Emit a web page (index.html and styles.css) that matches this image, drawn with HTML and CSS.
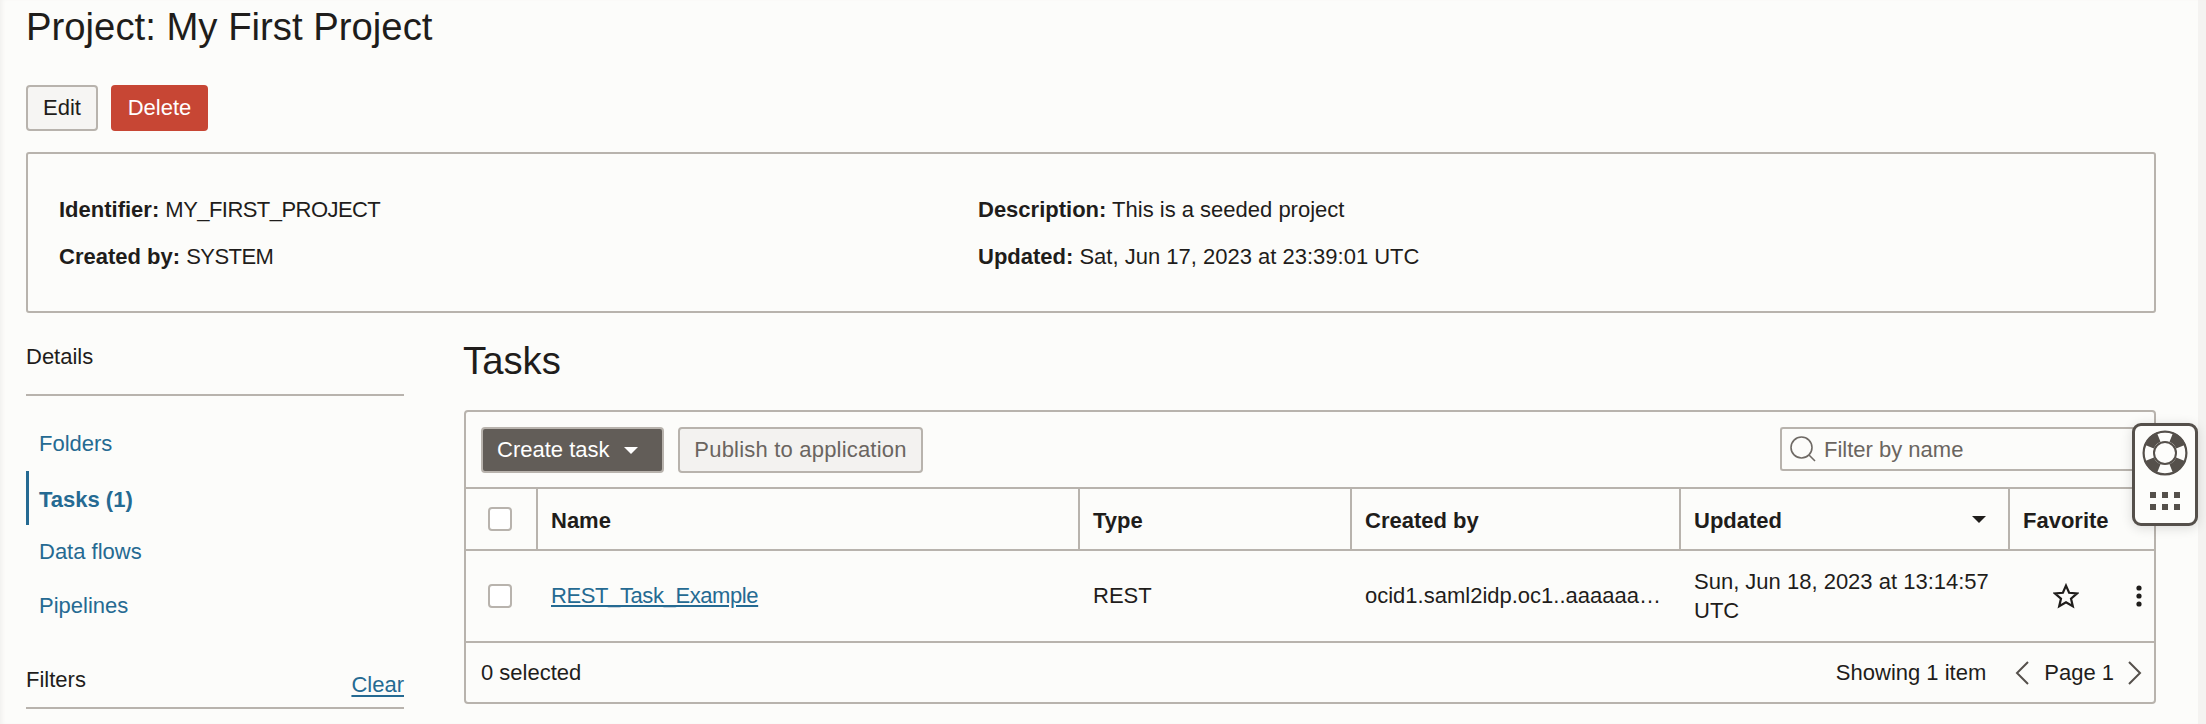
FILE: index.html
```html
<!DOCTYPE html>
<html lang="en">
<head>
<meta charset="utf-8">
<title>Project: My First Project</title>
<link rel="stylesheet" href="styles.css">
</head>
<body>
<div class="page">
  <h1 class="title">Project: My First Project</h1>
  <div class="actions">
    <button class="btn btn-edit">Edit</button>
    <button class="btn btn-delete">Delete</button>
  </div>
  <section class="info">
    <div class="info-col">
      <p class="info-line"><b>Identifier:</b> <span class="tight">MY_FIRST_PROJECT</span></p>
      <p class="info-line"><b>Created by:</b> <span class="tight">SYSTEM</span></p>
    </div>
    <div class="info-col">
      <p class="info-line"><b>Description:</b> This is a seeded project</p>
      <p class="info-line"><b>Updated:</b> Sat, Jun 17, 2023 at 23:39:01 UTC</p>
    </div>
  </section>
  <div class="layout">
    <aside class="side">
      <div class="side-head">Details</div>
      <nav class="side-nav">
        <a class="nav-item">Folders</a>
        <a class="nav-item nav-active">Tasks (1)</a>
        <a class="nav-item">Data flows</a>
        <a class="nav-item">Pipelines</a>
      </nav>
      <div class="filters-head"><span>Filters</span><a class="clear">Clear</a></div>
    </aside>
    <main class="main">
      <h2 class="section-title">Tasks</h2>
      <div class="card">
        <div class="toolbar">
          <button class="btn btn-create">Create task <svg class="caret" width="14" height="7" viewBox="0 0 14 7"><path d="M0 0h14L7 7z" fill="#fff"/></svg></button>
          <button class="btn btn-publish">Publish to application</button>
          <div class="search">
            <svg width="28" height="28" viewBox="0 0 28 28" fill="none" stroke="#6f6a65" stroke-width="1.6"><circle cx="12.5" cy="12.5" r="10.5"/><path d="M20 20l6 6"/></svg>
            <span>Filter by name</span>
          </div>
        </div>
        <div class="grid grid-head">
          <div class="cell cell-check"><span class="check"></span></div>
          <div class="cell">Name</div>
          <div class="cell">Type</div>
          <div class="cell">Created by</div>
          <div class="cell cell-sort">Updated <svg width="14" height="7" viewBox="0 0 14 7"><path d="M0 0h14L7 7z" fill="#1f1d1b"/></svg></div>
          <div class="cell">Favorite</div>
        </div>
        <div class="grid grid-row">
          <div class="cell cell-check"><span class="check"></span></div>
          <div class="cell"><a class="link">REST_Task_Example</a></div>
          <div class="cell">REST</div>
          <div class="cell"><span class="nowrap">ocid1.saml2idp.oc1..aaaaaa…</span></div>
          <div class="cell cell-date">Sun, Jun 18, 2023 at 13:14:57 UTC</div>
          <div class="cell cell-fav">
            <svg class="star" width="26" height="26" viewBox="0 0 26 26" fill="none" stroke="#1f1d1b" stroke-width="2.2" stroke-linejoin="miter"><path d="M13 2.6l3.1 7.2 7.8.7-5.9 5.1 1.8 7.6-6.8-4-6.8 4 1.8-7.6-5.9-5.1 7.8-.7z"/></svg>
            <svg class="kebab" width="6" height="24" viewBox="0 0 6 24" fill="#1f1d1b"><circle cx="3" cy="4" r="2.6"/><circle cx="3" cy="12" r="2.6"/><circle cx="3" cy="20" r="2.6"/></svg>
          </div>
        </div>
        <div class="footer">
          <span>0 selected</span>
          <div class="pager">
            <span class="showing">Showing 1 item</span>
            <svg width="14" height="24" viewBox="0 0 14 24" fill="none" stroke="#55504b" stroke-width="2"><path d="M13 1L2 12l11 11"/></svg>
            <span class="page-no">Page 1</span>
            <svg width="14" height="24" viewBox="0 0 14 24" fill="none" stroke="#55504b" stroke-width="2"><path d="M1 1l11 11L1 23"/></svg>
          </div>
        </div>
      </div>
    </main>
  </div>
</div>
<div class="widget">
  <svg width="46" height="46" viewBox="0 0 46 46" fill="none">
    <circle cx="23" cy="23" r="17" stroke="#55504b" stroke-width="10" pathLength="360" stroke-dasharray="46 44" stroke-dashoffset="-22"/>
    <circle cx="23" cy="23" r="21.4" stroke="#55504b" stroke-width="2.2"/>
    <circle cx="23" cy="23" r="11" stroke="#55504b" stroke-width="2"/>
  </svg>
  <div class="dots"><i></i><i></i><i></i><i></i><i></i><i></i></div>
</div>
</body>
</html>
```
FILE: styles.css
```css
* { box-sizing: border-box; }
html, body { margin: 0; height: 100%; }
body {
  background: linear-gradient(to left, #f4f3f1 8px, #fcfcfa 8px);
  color: #1f1d1b;
  font-family: "Liberation Sans", Arial, sans-serif;
  font-size: 22px;
  overflow: hidden;
  box-shadow: inset 4px 0 4px -2px #f1f0ee;
}
.page { width: 2156px; padding-left: 26px; }
.title { margin: 0; height: 85px; padding-top: 5px; font-size: 38.3px; line-height: 44px; font-weight: 400; }
.actions { display: flex; gap: 13px; height: 46px; }
.btn {
  font: inherit;
  height: 46px;
  border-radius: 4px;
  padding: 0;
  display: inline-flex;
  align-items: center;
  justify-content: center;
}
.btn-edit { width: 72px; background: #f6f5f3; border: 2px solid #b8b3ad; color: #1f1d1b; }
.btn-delete { width: 97px; background: #c74634; border: 0; color: #fff; }
.info {
  display: grid;
  grid-template-columns: 919px 1fr;
  margin-top: 21px;
  height: 161px;
  border: 2px solid #b8b3ad;
  border-radius: 3px;
  padding: 43px 32px 0 31px;
}
.info-line { margin: 0 0 22px; line-height: 25px; }
.tight { letter-spacing: -0.55px; }
.layout { display: flex; gap: 59px; }
.side { width: 378px; flex: none; }
.side-head { height: 83px; padding-top: 31px; line-height: 26px; border-bottom: 2px solid #b8b3ad; }
.side-nav { display: flex; flex-direction: column; padding-top: 21px; }
.nav-item { color: #256a92; height: 54px; padding-left: 13px; display: flex; align-items: center; }
.nav-active { font-weight: 700; border-left: 3px solid #256a92; padding-left: 10px; padding-top: 4px; }
.filters-head {
  display: flex;
  justify-content: space-between;
  height: 76px;
  padding-top: 34px;
  border-bottom: 2px solid #b8b3ad;
  line-height: 26px;
}
.clear { color: #256a92; text-decoration: underline; text-decoration-thickness: 2px; text-underline-offset: 3px; margin-top: 5px; }
.main { flex: 1; min-width: 0; }
.section-title { margin: 0; height: 97px; padding-top: 26px; font-size: 38.3px; line-height: 44px; font-weight: 400; }
.card { border: 2px solid #b8b3ad; border-radius: 4px; height: 294px; margin-left: 1px; position: relative; }
.toolbar { display: flex; align-items: flex-start; height: 77px; padding: 15px 0 0 15px; border-bottom: 2px solid #b8b3ad; }
.btn-create { width: 183px; gap: 14px; justify-content: flex-start; padding-left: 14px; background: #625d58; border: 2px solid #b8b3ad; color: #fff; }
.btn-publish { width: 245px; margin-left: 14px; background: #f3f2f0; border: 2px solid #b8b3ad; color: #6a6560; letter-spacing: .2px; }
.search {
  margin-left: auto;
  width: 374px;
  height: 44px;
  border: 2px solid #b8b3ad;
  border-right: 0;
  border-radius: 3px 0 0 3px;
  display: flex;
  align-items: center;
  gap: 7px;
  padding-left: 7px;
  color: #6a6560;
}
.search span { padding-top: 2px; }
.grid { display: grid; grid-template-columns: 70px 542px 272px 329px 329px 1fr; }
.grid-head { height: 62px; border-bottom: 2px solid #b8b3ad; font-weight: 700; }
.grid-row { height: 92px; border-bottom: 2px solid #b8b3ad; }
.cell { display: flex; align-items: center; padding: 0 14px 0 13px; min-width: 0; }
.grid-head .cell + .cell { border-left: 2px solid #b8b3ad; padding-top: 3px; }
.grid-row .cell + .cell { border-left: 2px solid transparent; }
.cell-check { justify-content: center; padding: 0 2px 0 0; }
.check { width: 24px; height: 24px; border: 2px solid #b8b3ad; border-radius: 4px; background: #fff; }
.cell-sort { justify-content: space-between; padding-right: 22px; }
.cell-sort svg { margin-top: -3px; }
.link { color: #256a92; text-decoration: underline; letter-spacing: -0.4px; }
.nowrap { white-space: nowrap; }
.cell-date { line-height: 29px; }
.cell-fav { justify-content: space-between; padding: 0 12px 0 43px; }
.footer { display: flex; justify-content: space-between; align-items: center; height: 59px; padding: 0 12px 0 15px; }
.pager { display: flex; align-items: center; }
.showing { margin-right: 29px; }
.page-no { margin: 0 14px 0 15px; }
.widget {
  position: fixed;
  left: 2132px;
  top: 423px;
  width: 66px;
  height: 103px;
  background: #fdfdfb;
  border: 3px solid #55504b;
  border-radius: 9px;
  box-shadow: 0 2px 12px rgba(0,0,0,.14);
  display: flex;
  flex-direction: column;
  align-items: center;
  padding-top: 4px;
}
.dots { display: grid; grid-template-columns: repeat(3, 6px); gap: 6px; margin-top: 16px; }
.dots i { width: 6px; height: 6px; background: #55504b; }
```
